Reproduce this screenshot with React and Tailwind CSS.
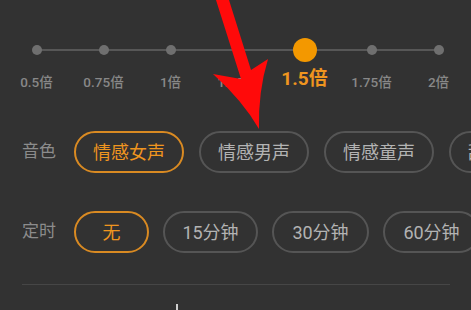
import React from 'react';

const speeds = ['0.5倍', '0.75倍', '1倍', '1.25倍', '1.5倍', '1.75倍', '2倍'];
const activeSpeed = 4;

const voices = [
  { label: '情感女声', w: 'w-[110px]' },
  { label: '情感男声', w: 'w-[110px]' },
  { label: '情感童声', w: 'w-[110px]' },
  { label: '甜美女声', w: 'w-[110px]' },
];

const timers = [
  { label: '无', w: 'w-[75px]' },
  { label: '15分钟', w: 'w-[95px]' },
  { label: '30分钟', w: 'w-[97px]' },
  { label: '60分钟', w: 'w-[97px]' },
];

function Chip({ label, w, active }) {
  return (
    <div
      className={`${w} h-[42px] shrink-0 rounded-full flex items-center justify-center text-[18px] border-2 ${
        active ? 'border-[#d98a22] text-[#ef951f]' : 'border-[#555555] text-[#b3b3b3]'
      }`}
    >
      {label}
    </div>
  );
}

function App() {
  return (
    <div className="w-[471px] h-[310px] bg-[#323232] relative overflow-hidden font-['Roboto','Noto_Sans_CJK_SC',sans-serif]">
      {/* speed slider */}
      <div className="relative pt-[38px] ml-[3px] w-[469px]">
        <div className="absolute left-[34px] top-[49px] w-[401px] h-[2px] bg-[#575757]" />
        <div className="relative grid grid-cols-7 w-[469px]">
          {speeds.map((s, i) => (
            <div key={s} className="flex flex-col items-center">
              <div className="h-6 flex items-center justify-center">
                {i === activeSpeed ? (
                  <div className="w-6 h-6 rounded-full bg-[#f39800]" />
                ) : (
                  <div className="w-[10px] h-[10px] rounded-full bg-[#6f6f6f]" />
                )}
              </div>
              {i === activeSpeed ? (
                <div className="mt-[7px] h-5 leading-5 text-[19px] font-bold text-[#ef951f] whitespace-nowrap">{s}</div>
              ) : (
                <div className="mt-[10px] h-5 leading-5 text-[13.5px] font-medium text-[#888888] whitespace-nowrap">{s}</div>
              )}
            </div>
          ))}
        </div>
      </div>

      {/* voice row */}
      <div className="flex items-center pl-[22px] mt-[39px]">
        <div className="w-[52px] shrink-0 text-[17px] text-[#8c8c8c]">音色</div>
        <div className="flex gap-[15px]">
          {voices.map((v, i) => (
            <Chip key={v.label} label={v.label} w={v.w} active={i === 0} />
          ))}
        </div>
      </div>

      {/* timer row */}
      <div className="flex items-center pl-[22px] mt-[38px]">
        <div className="w-[52px] shrink-0 text-[17px] text-[#8c8c8c]">定时</div>
        <div className="flex gap-[14px]">
          {timers.map((t, i) => (
            <Chip key={t.label} label={t.label} w={t.w} active={i === 0} />
          ))}
        </div>
      </div>

      <div className="ml-[22px] mt-[31px] w-[428px] h-px bg-[#464646]" />
      <div className="ml-[176px] mt-[19px] w-[2px] h-[6px] bg-[#cfcfcf]" />

      {/* red annotation arrow */}
      <svg className="absolute left-0 top-0 pointer-events-none" width="471" height="310" viewBox="0 0 471 310">
        <path
          d="M216 0 L229 0 L251 70 L268 59 Q258 92 259 129 Q243 101 213 74 L241 79 Z"
          fill="#ff0a0a"
        />
      </svg>
    </div>
  );
}

export default App;
